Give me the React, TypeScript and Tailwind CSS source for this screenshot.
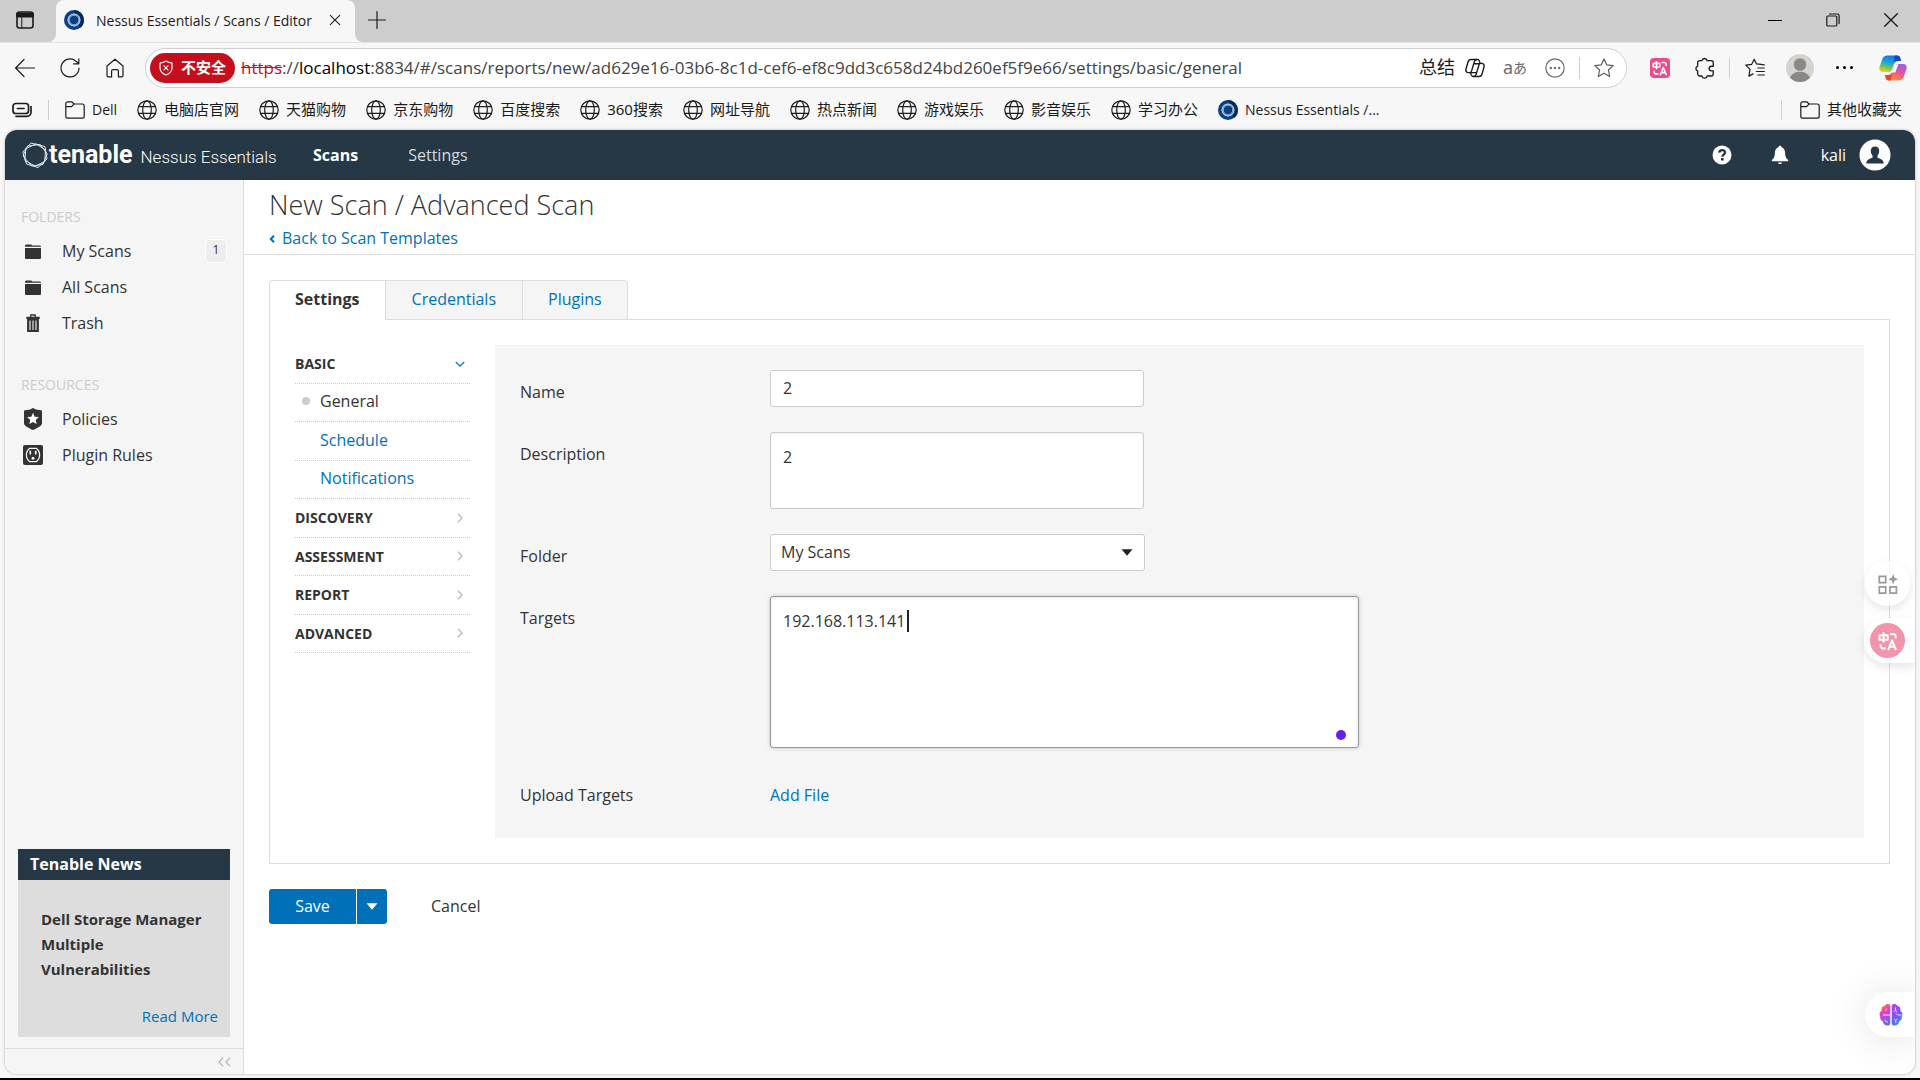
import React from "react";

type IconProps = { className?: string };

const stroke = {
  fill: "none",
  stroke: "currentColor",
  strokeWidth: 1.2,
  strokeLinecap: "round" as const,
  strokeLinejoin: "round" as const,
};

const TabActionsIcon = ({ className }: IconProps) => (
  <svg viewBox="0 0 20 20" className={className} {...stroke} strokeWidth={1.6}>
    <rect x="2" y="2" width="16" height="16" rx="2.5" />
    <path d="M2 3.5h16v3.2H2z" fill="currentColor" />
    <path d="M6.8 7v11" strokeWidth={1} />
  </svg>
);
const NessusIcon = ({ className }: IconProps) => (
  <svg viewBox="0 0 20 20" className={className}>
    <circle cx="10" cy="10" r="10" fill="#0a3f86" />
    <path d="M10 0a10 10 0 0 1 10 10 10 10 0 0 1-4 8z" fill="#072a5c" />
    <g fill="none" stroke="#bcd4ee" strokeWidth="0.8">
      <path d="M10 3.6l5.6 3.2v6.4L10 16.4l-5.6-3.2V6.800z" />
      <path d="M6.800 4.400h6.400l3.200 5.600-3.200 5.600H6.800L3.600 10z" />
      <circle cx="10" cy="10" r="4.800" />
    </g>
  </svg>
);
const CloseIcon = ({ className }: IconProps) => (
  <svg viewBox="0 0 14 14" className={className} {...stroke}>
    <path d="M1.500 1.500l11 11M12.500 1.500l-11 11" />
  </svg>
);
const PlusIcon = ({ className }: IconProps) => (
  <svg viewBox="0 0 20 20" className={className} {...stroke}>
    <path d="M10 1.500v17M1.500 10h17" />
  </svg>
);
const RestoreIcon = ({ className }: IconProps) => (
  <svg viewBox="0 0 14 14" className={className} {...stroke}>
    <rect x="0.800" y="3" width="10" height="10" rx="1" />
    <path d="M3.500 1h8a1.600 1.600 0 0 1 1.600 1.600v8" />
  </svg>
);
const BackIcon = ({ className }: IconProps) => (
  <svg viewBox="0 0 20 20" className={className} {...stroke}>
    <path d="M19.500 10H.8M9 1.500L.6 10 9 18.500" />
  </svg>
);
const ReloadIcon = ({ className }: IconProps) => (
  <svg viewBox="0 0 20 20" className={className} {...stroke}>
    <path d="M19 10.200a9 9 0 1 1-3-7L18.500 5.300M18.800.8v5h-5.300" />
  </svg>
);
const HomeIcon = ({ className }: IconProps) => (
  <svg viewBox="0 0 20 20" className={className} {...stroke}>
    <path d="M10 1.200L2 8v9.500a1.400 1.400 0 0 0 1.400 1.400h3.200V13a1.400 1.400 0 0 1 1.400-1.400h4a1.400 1.400 0 0 1 1.400 1.400v5.900h3.200a1.400 1.400 0 0 0 1.400-1.400V8z" />
  </svg>
);
const ShieldXIcon = ({ className }: IconProps) => (
  <svg viewBox="0 0 14 16" className={className} {...stroke}>
    <path d="M7 1c1.700 1.300 3.600 1.900 6 2v4.800c0 3.400-2 5.800-6 7.200-4-1.400-6-3.800-6-7.200V3c2.400-.1 4.300-.7 6-2z" />
    <path d="M5 5.800l4 4M9 5.800l-4 4" />
  </svg>
);
const CopilotOutlineIcon = ({ className }: IconProps) => (
  <svg viewBox="0 0 20 20" className={className} {...stroke} strokeWidth={1.400}>
    <path d="M7.600 1.500h4.800c1.200 0 1.700.7 2 1.600l.7 2.300h1.400c2 0 3.100 1.500 2.500 3.600l-2 7c-.4 1.500-1.300 2.500-2.900 2.500H8.300c-1.200 0-1.800-.7-2.100-1.600l-.6-2.300H3.400C1.500 14.600.4 13.100 1 11l2-7c.5-1.500 1.500-2.500 3-2.500z" />
    <path d="M11.800 1.500c-1.300 0-2 .8-2.400 2L6.600 12.900c-.4 1.200-1 1.700-2.200 1.700M8.700 18.500c1.200 0 2-.8 2.400-2l2.800-9.400c.3-1.100 1-1.700 2.200-1.700M8.700 5.800h6M5.600 14.600h6" />
  </svg>
);
const DotsCircleIcon = ({ className }: IconProps) => (
  <svg viewBox="0 0 20 20" className={className} {...stroke}>
    <circle cx="10" cy="10" r="9.200" />
    <g fill="currentColor" stroke="none">
      <circle cx="5.800" cy="10" r="1.200" /><circle cx="10" cy="10" r="1.200" /><circle cx="14.200" cy="10" r="1.200" />
    </g>
  </svg>
);
const StarIcon = ({ className }: IconProps) => (
  <svg viewBox="0 0 20 20" className={className} {...stroke}>
    <path d="M10 .9l2.700 5.900 6.500.8-4.800 4.400 1.300 6.500L10 15.300l-5.700 3.200L5.600 12 .8 7.600l6.500-.8z" />
  </svg>
);
const TranslateIcon = ({ className }: IconProps) => (
  <svg viewBox="0 0 20 20" className={className} fill="none" stroke="currentColor" strokeWidth="2" strokeLinejoin="round">
    <path d="M1.500 4.200h8.200v4.600H1.500zM5.600 1.200v10.300M12 3.200h3.600a2 2 0 0 1 2 2v2.200M2.600 13.200v1.800a2.400 2.400 0 0 0 2.400 2.400h3M10.200 19l3.900-9.600L18 19M11.400 15.800h5.400" />
  </svg>
);
const PuzzleIcon = ({ className }: IconProps) => (
  <svg viewBox="0 0 20 20" className={className} {...stroke}>
    <path d="M7.200 3.300a2.400 2.400 0 0 1 4.700 0h3.600a2 2 0 0 1 2 2v3.100h-1.600a2.100 2.100 0 0 0 0 4.200h1.600v2.700a2 2 0 0 1-2 2h-3.600a2.400 2.400 0 0 1-4.700 0H5.300a2 2 0 0 1-2-2v-2.600a2.400 2.400 0 0 1 0-4.500V5.300a2 2 0 0 1 2-2z" />
  </svg>
);
const FavoritesIcon = ({ className }: IconProps) => (
  <svg viewBox="0 0 20 20" className={className} {...stroke}>
    <path d="M19.300 6.800l-5.400-.6L11.500 6 9.200 1.200 6.600 6.400.8 7.200 5 11.400l-1.100 6.700L8 15.900M12.800 10h6.500M11.300 13.500h8M12.800 17h6.500" />
  </svg>
);
const CopilotIcon = ({ className }: IconProps) => (
  <svg viewBox="0 0 28 26" className={className}>
    <defs>
      <linearGradient id="cpA" x1="0.600" y1="0" x2="0.300" y2="1">
        <stop offset="0" stopColor="#1b6fe0" /><stop offset=".45" stopColor="#18a8d8" /><stop offset=".75" stopColor="#7cc453" /><stop offset="1" stopColor="#f2cf12" />
      </linearGradient>
      <linearGradient id="cpB" x1="0.800" y1="0" x2="0.300" y2="1">
        <stop offset="0" stopColor="#9a5bea" /><stop offset=".45" stopColor="#e2559c" /><stop offset=".8" stopColor="#fb7a4e" /><stop offset="1" stopColor="#fba03a" />
      </linearGradient>
    </defs>
    <path d="M8.500.5h9.500c2 0 2.800 1 3.300 2.700L22 6h-3.600c-2 0-3 1.200-3.500 3l-1.700 5.300c-.7 2-1.700 2.600-3.600 2.600H3.800C.8 16.900-.2 14.700.6 12L3.300 4C4.200 1.700 5.700.5 8.500.5z" fill="url(#cpA)" />
    <path d="M16 .5h2c2 0 2.800 1 3.300 2.700L22 6h-3.600c-2 0-3 1.200-3.500 3z" fill="#1746c4" />
    <path d="M19.500 25.500H10c-2 0-2.800-1-3.300-2.700L6 20h3.600c2 0 3-1.200 3.500-3l1.700-5.400c.7-2 1.700-2.500 3.600-2.500h5.800c3 0 4 2.200 3.200 4.900L24.700 22c-.9 2.300-2.400 3.500-5.200 3.500z" fill="url(#cpB)" />
    <path d="M12 25.500h-2c-2 0-2.800-1-3.300-2.700L6 20h3.600c2 0 3-1.200 3.500-3z" fill="#ee4034" />
    <path d="M15.700 9.300h3.700l-3.200 8.200h-3.700z" fill="#fff" />
  </svg>
);
const CollectIcon = ({ className }: IconProps) => (
  <svg viewBox="0 0 20 16" className={className} {...stroke} strokeWidth={1.700}>
    <rect x="1" y="1.500" width="15.500" height="10" rx="2.800" />
    <path d="M5.500 6.500h6.500M4 14.300h11a4 4 0 0 0 4-4V4.500" />
  </svg>
);
const FolderOutlineIcon = ({ className }: IconProps) => (
  <svg viewBox="0 0 20 18" className={className} {...stroke}>
    <path d="M.8 5.500V2.700A1.900 1.900 0 0 1 2.700.8h4l2.500 2.200h8.100a1.900 1.900 0 0 1 1.900 1.900v10.300a1.900 1.900 0 0 1-1.900 1.900H2.700a1.900 1.900 0 0 1-1.900-1.900zM.8 5.700h5.700L9.200 3" />
  </svg>
);
const GlobeIcon = ({ className }: IconProps) => (
  <svg viewBox="0 0 20 20" className={className} {...stroke}>
    <circle cx="10" cy="10" r="9.200" />
    <ellipse cx="10" cy="10" rx="4.300" ry="9.200" />
    <path d="M1.600 6.700h16.800M1.600 13.300h16.800" />
  </svg>
);
const TenableMark = ({ className }: IconProps) => (
  <svg viewBox="0 0 26 26" className={className} fill="none" stroke="#dfe5ea" strokeWidth="1">
    <path d="M9 1l14 3.500 2 12.500-9 8.500L4.500 22 .8 10z" />
    <path d="M14 1.800l9.500 6-.8 11.700-9.500 4.700L3 18.500l.8-11.700z" />
    <path d="M5.500 4l12.700-1.500 7 9.500L21 22.500 9.500 24 1 14z" />
  </svg>
);
const HelpIcon = ({ className }: IconProps) => (
  <svg viewBox="0 0 20 20" className={className}>
    <circle cx="10" cy="10" r="9.500" fill="#fff" />
    <path d="M7.200 7.700c.2-1.700 1.300-2.600 2.900-2.600 1.700 0 2.900.9 2.900 2.400 0 2.100-2.700 2.100-2.700 4.300" fill="none" stroke="#263746" strokeWidth="2.300" />
    <rect x="9" y="13" width="2.600" height="2.500" fill="#263746" />
  </svg>
);
const BellIcon = ({ className }: IconProps) => (
  <svg viewBox="0 0 18 20" className={className} fill="#fff">
    <path d="M9 .8c1 0 1.500.6 1.500 1.500 2.500.8 3.400 2.800 3.600 5.500.2 3.700.8 5.700 3.100 7.300v1.100H.8v-1.100c2.300-1.600 2.900-3.600 3.100-7.300.2-2.700 1.100-4.700 3.600-5.500C7.500 1.400 8 .8 9 .8zM7 17.500h4c-.2 1-1 1.600-2 1.600s-1.800-.6-2-1.600z" />
  </svg>
);
const UserIcon = ({ className }: IconProps) => (
  <svg viewBox="0 0 32 32" className={className}>
    <circle cx="16" cy="16" r="15.500" fill="#fff" />
    <path d="M16 7.500c2.900 0 4.300 1.900 4.200 4.500-.1 2.300-.9 3.500-1.700 4.500v2.200c2.600 1 6 1.800 6.300 5.800H7.200c.3-4 3.700-4.800 6.300-5.800v-2.200c-.8-1-1.600-2.200-1.700-4.500-.1-2.600 1.300-4.500 4.200-4.500z" fill="#263746" />
  </svg>
);
const FolderIcon = ({ className }: IconProps) => (
  <svg viewBox="0 0 16 16" className={className} fill="#333">
    <path d="M0 3.800V2.600l1-1h5.200l1 .9h8l.8.800v.5zM0 4.900h16V15a1 1 0 0 1-1 1H1a1 1 0 0 1-1-1z" />
  </svg>
);
const TrashIcon = ({ className }: IconProps) => (
  <svg viewBox="0 0 14 18" className={className}>
    <path d="M4.800 3V1h4.400v2" fill="none" stroke="#333" strokeWidth="1.300" />
    <path d="M.3 2.800h13.400V5H.3zM1.100 5h11.800v13H1.100z" fill="#333" />
    <path d="M4 6.500v9.500M7 6.500v9.500M10 6.500v9.500" stroke="#f5f5f5" strokeWidth="1.100" />
  </svg>
);
const PolicyIcon = ({ className }: IconProps) => (
  <svg viewBox="0 0 18 22" className={className}>
    <path d="M9 0c2.600 1.500 5.200 2.200 8.300 2.200L18 3v12.500c0 2.200-5.500 5-9 6.500-3.500-1.500-9-4.300-9-6.500V3l.7-.8C3.800 2.200 6.400 1.500 9 0z" fill="#333" />
    <path d="M9 4.800l1.700 3.900 4.200.4-3.200 2.800 1 4.200L9 13.900l-3.700 2.200 1-4.200-3.200-2.800 4.200-.4z" fill="#fff" />
  </svg>
);
const PluginIcon = ({ className }: IconProps) => (
  <svg viewBox="0 0 20 20" className={className}>
    <rect width="20" height="20" rx="2" fill="#333" />
    <path d="M6.800 3.300h6.400c2.300 1.600 3.400 3.600 3.400 6.700s-1.100 5.100-3.400 6.700H6.800C4.500 15.100 3.400 13.100 3.400 10s1.100-5.100 3.400-6.700z" fill="none" stroke="#fff" strokeWidth="1.200" />
    <path d="M6.500 5.800h1.600v3.600H6.500zM11.900 5.800h1.600v3.600h-1.600zM8.600 14.500v-1.200c0-1.800 2.800-1.800 2.800 0v1.200z" fill="#fff" />
  </svg>
);
const BrainIcon = ({ className }: IconProps) => (
  <svg viewBox="0 0 24 24" className={className}>
    <defs>
      <linearGradient id="brA" x1="0.300" y1="0" x2="0.600" y2="1">
        <stop offset="0" stopColor="#f58a2c" /><stop offset=".35" stopColor="#e63fc0" /><stop offset="1" stopColor="#5b6cf5" />
      </linearGradient>
      <linearGradient id="brB" x1="0.200" y1="0" x2="0.700" y2="1">
        <stop offset="0" stopColor="#b43ff0" /><stop offset=".6" stopColor="#6e5cf5" /><stop offset="1" stopColor="#2aa2f2" />
      </linearGradient>
    </defs>
    <path d="M11.300 2.500C10.500.8 7 .3 5.800 2.800 3 3.300 2 5.600 2.700 7.700.4 9 0 11.800 1.300 13.700.8 16 2 17.700 3.800 18.300c.2 2.500 1.900 4.100 3.700 4.200 2 .5 3.800-.6 3.800-2.500z" fill="url(#brA)" />
    <path d="M12.700 2.500c.8-1.700 4.300-2.200 5.500.3C21 3.300 22 5.600 21.300 7.700c2.300 1.300 2.700 4.100 1.400 6 .5 2.300-.7 4-2.500 4.600-.2 2.500-1.900 4.100-3.700 4.200-2 .5-3.800-.6-3.800-2.500z" fill="url(#brB)" />
    <path d="M4 12h7M6 7.500c1 0 1.500-.6 1.600-1.800M6 16.800c.2 1.700 1.300 2.400 3 2.200M16.500 4.500v3M14.800 8.800l1.700-1.300 1.700 1.300M18.500 12h4M18.500 12l-1.500-1.500M15 16l1.700 1.300 1.700-1.300M16.700 17.300v2.500" fill="none" stroke="#ffd9f6" strokeWidth="1" />
  </svg>
);
const Caret = ({ className }: IconProps) => (
  <svg viewBox="0 0 12 7" className={className} fill="currentColor"><path d="M.5.300h11L6 6.800z" /></svg>
);
const Chevron = ({ className }: IconProps) => (
  <svg viewBox="0 0 6 10" className={className} fill="none" stroke="currentColor" strokeWidth="1.300"><path d="M1 .8L5 5 1 9.200" /></svg>
);

const bookmarks = ["电脑店官网", "天猫购物", "京东购物", "百度搜索", "360搜索", "网址导航", "热点新闻", "游戏娱乐", "影音娱乐", "学习办公"];

const iconBtn = "flex h-10 w-[45px] shrink-0 items-center justify-center";

function Browser() {
  return (
    <div className="font-['Noto_Sans','Noto_Sans_CJK_SC',sans-serif] text-[#1b1b1b]">
      <div className="flex h-[42px] bg-[#cdcdcd]">
        <div className="w-14 bg-[#f7f7f7]">
          <button aria-label="Tab actions" className="flex h-full w-full items-center justify-center rounded-br-lg bg-[#cdcdcd] pr-1.5 pb-0.5"><TabActionsIcon className="size-5" /></button>
        </div>
        <div className="flex w-[299px] items-center rounded-t-lg bg-[#f7f7f7] pb-0.5 pl-2">
          <NessusIcon className="size-5 shrink-0" />
          <span className="ml-3 flex-1 font-['Open_Sans',sans-serif] text-[14px] whitespace-nowrap">Nessus Essentials / Scans / Editor</span>
          <button aria-label="Close tab" className="mr-2.5 p-1"><CloseIcon className="size-3" /></button>
        </div>
        <div className="flex-1 bg-[#f7f7f7]">
          <div className="flex h-full items-center justify-between rounded-bl-lg bg-[#cdcdcd] pb-0.5">
            <button aria-label="New tab" className="ml-[11px] p-px"><PlusIcon className="size-5" /></button>
            <div className="flex">
              <button aria-label="Minimize" className="flex h-10 w-[58px] items-center justify-center"><span className="h-px w-3.5 bg-black" /></button>
              <button aria-label="Restore" className="flex h-10 w-[58px] items-center justify-center"><RestoreIcon className="size-3.5" /></button>
              <button aria-label="Close" className="flex h-10 w-[58px] items-center justify-center"><CloseIcon className="size-4" /></button>
            </div>
          </div>
        </div>
      </div>
      <div className="flex h-[50px] items-center border-t border-[#e4e4e4] bg-[#f7f7f7] px-0.5">
        <button aria-label="Back" className={iconBtn}><BackIcon className="size-5" /></button>
        <button aria-label="Reload" className={iconBtn}><ReloadIcon className="size-5" /></button>
        <button aria-label="Home" className={iconBtn}><HomeIcon className="size-5" /></button>
        <div className="mr-2.5 ml-2 flex h-10 min-w-0 flex-1 items-center rounded-full border border-[#cfcfcf] bg-white pl-1">
          <button className="flex h-[30px] w-[85px] shrink-0 items-center justify-center gap-2 rounded-full bg-[#c50f1f] text-[15px] font-bold text-white"><ShieldXIcon className="h-4 w-3.5" />不安全</button>
          <p className="ml-1.5 flex-1 truncate font-['Open_Sans',sans-serif] text-[17px] text-[#444]">
            <span className="text-[#c50f1f] line-through">https</span>://<span className="text-black">localhost</span>:8834/#/scans/reports/new/ad629e16-03b6-8c1d-cef6-ef8c9dd3c658d24bd260ef5f9e66/settings/basic/general
          </p>
          <button className="mr-2.5 flex items-center gap-2.5 text-[18px]">总结<CopilotOutlineIcon className="size-5" /></button>
          <button className="flex w-10 items-center justify-center text-[18px] text-[#6b6b6b]">a<span className="text-[14px]">あ</span></button>
          <button aria-label="More actions" className="flex w-10 justify-center text-[#6b6b6b]"><DotsCircleIcon className="size-5" /></button>
          <span className="mx-1 h-[22px] w-px bg-[#d0d0d0]" />
          <button aria-label="Favorite" className="mr-0.5 flex w-10 justify-center text-[#5c5c5c]"><StarIcon className="size-5" /></button>
        </div>
        <button aria-label="Translate" className={iconBtn}><span className="flex size-5 items-center justify-center rounded-sm bg-[#ec4a89] text-white"><TranslateIcon className="size-4" /></span></button>
        <button aria-label="Extensions" className={iconBtn}><PuzzleIcon className="size-[22px]" /></button>
        <span className="mx-0.5 h-5 w-px bg-[#d0d0d0]" />
        <button aria-label="Favorites" className={iconBtn}><FavoritesIcon className="size-5" /></button>
        <button aria-label="Profile" className={iconBtn}>
          <svg viewBox="0 0 28 28" className="size-7">
            <circle cx="14" cy="14" r="14" fill="#d5d3cf" /><circle cx="14" cy="10.500" r="6.300" fill="#8a8784" />
            <path d="M4 23.800c2-4.300 5.500-6 10-6s8 1.700 10 6A14 14 0 0 1 14 28a14 14 0 0 1-10-4.200z" fill="#8a8784" />
          </svg>
        </button>
        <button aria-label="Menu" className={iconBtn + " gap-1"}><span className="size-[3px] rounded-full bg-black" /><span className="size-[3px] rounded-full bg-black" /><span className="size-[3px] rounded-full bg-black" /></button>
        <button aria-label="Copilot" className="flex w-[51px] shrink-0 justify-center"><CopilotIcon className="h-[26px] w-7" /></button>
      </div>
      <div className="flex h-[38px] items-center bg-[#f7f7f7] pr-[18px] pb-[3px] pl-3 text-[15px]">
        <button aria-label="Workspaces"><CollectIcon className="h-4 w-5" /></button>
        <span className="mr-4 ml-4 h-5 w-px bg-[#d0d0d0]" />
        <nav className="flex flex-1 items-center gap-5 whitespace-nowrap">
          <a href="#dell" className="flex items-center gap-[7px]"><FolderOutlineIcon className="h-[18px] w-5" /><span className="font-['Open_Sans',sans-serif] text-[14px]">Dell</span></a>
          {bookmarks.map((b) => (
            <a key={b} href="#bookmark" className="flex items-center gap-[7px]"><GlobeIcon className="size-5" />{b}</a>
          ))}
          <a href="#nessus" className="flex items-center gap-[7px]"><NessusIcon className="size-5" /><span className="font-['Open_Sans',sans-serif] text-[14px]">Nessus Essentials /...</span></a>
        </nav>
        <span className="mr-[18px] h-5 w-px bg-[#d0d0d0]" />
        <button className="flex items-center gap-[7px]"><FolderOutlineIcon className="h-[18px] w-5" />其他收藏夹</button>
      </div>
    </div>
  );
}

const sideLink = "flex h-9 items-center pr-4 pl-[15px]";
const sideIcon = "mr-4 flex w-[26px] justify-center";

function Sidebar() {
  return (
    <aside className="flex w-[239px] shrink-0 flex-col border-r border-[#ddd] bg-[#f5f5f5]">
      <h2 className="mt-[25px] pl-4 text-[14px] leading-6 text-[#ccc]">FOLDERS</h2>
      <a href="#my" className={sideLink + " mt-1"}><span className={sideIcon}><FolderIcon className="size-4" /></span><span className="flex-1">My Scans</span><span className="flex h-6 w-[22px] items-center justify-center rounded-sm border border-white bg-[#eee] pb-0.5 text-[12px]">1</span></a>
      <a href="#all" className={sideLink}><span className={sideIcon}><FolderIcon className="size-4" /></span>All Scans</a>
      <a href="#trash" className={sideLink}><span className={sideIcon}><TrashIcon className="h-[18px] w-3.5" /></span>Trash</a>
      <h2 className="mt-8 pl-4 text-[14px] leading-6 text-[#ccc]">RESOURCES</h2>
      <a href="#policies" className={sideLink + " mt-1"}><span className={sideIcon}><PolicyIcon className="h-[22px] w-[18px]" /></span>Policies</a>
      <a href="#rules" className={sideLink}><span className={sideIcon}><PluginIcon className="size-5" /></span>Plugin Rules</a>
      <section className="mx-[13px] mt-auto mb-[11px] bg-[#ddd]">
        <h3 className="flex h-[31px] items-center bg-[#263746] pb-0.5 pl-3 text-[16px] font-bold text-white">Tenable News</h3>
        <p className="pt-[27px] pl-[23px] text-[15px] leading-[25px] font-bold">Dell Storage Manager<br />Multiple<br />Vulnerabilities</p>
        <a href="#more" className="block pt-[22px] pr-3 pb-[9px] text-right text-[15px] leading-6 text-[#0071b9]">Read More</a>
      </section>
      <button aria-label="Collapse" className="flex h-[26px] items-center justify-end gap-px border-t border-[#ddd] pr-3 text-[#bbb]">
        <Chevron className="h-2.5 w-1.5 rotate-180" /><Chevron className="h-2.5 w-1.5 rotate-180" />
      </button>
    </aside>
  );
}

const groupRow = "flex w-full items-center justify-between border-b border-dotted border-[#ccc] pr-[7px] text-left text-[14px] font-bold";
const subRow = "flex items-center border-b border-dotted border-[#ccc] pb-0.5 pl-[25px] text-[#0071b9]";
const label = "w-[250px] shrink-0 pt-2.5 leading-6";
const field = "block rounded-[3px] border border-[#ccc] bg-white outline-none";

function SettingsForm() {
  return (
    <form className="flex min-w-0 flex-1 flex-col gap-[25px] bg-[#f5f5f5] p-[25px]">
      <div className="flex"><label htmlFor="name" className={label}>Name</label><input id="name" defaultValue="2" className={field + " h-[37px] w-[374px] px-3 pb-0.5"} /></div>
      <div className="flex"><label htmlFor="desc" className={label}>Description</label><textarea id="desc" defaultValue="2" className={field + " h-[77px] w-[374px] resize-none px-3 py-3 leading-6 shadow-[inset_0_1px_2px_rgba(0,0,0,0.08)]"} /></div>
      <div className="flex"><label htmlFor="folder" className={label}>Folder</label>
        <div className="relative">
          <select id="folder" className={field + " h-[37px] w-[375px] appearance-none px-2.5 pb-0.5"}><option>My Scans</option></select>
          <Caret className="pointer-events-none absolute top-[15px] right-3 h-[7px] w-3 text-[#222]" />
        </div>
      </div>
      <div className="flex"><label htmlFor="targets" className={label}>Targets</label>
        <div className="relative">
          <textarea id="targets" defaultValue="192.168.113.141" className="block h-[152px] w-[589px] resize-none rounded-[3px] border border-[#999] bg-white px-3 py-3 leading-6 shadow-[0_0_4px_rgba(0,0,0,0.2),inset_0_1px_3px_rgba(0,0,0,0.1)] outline-none" />
          <span className="absolute top-3.5 left-[137px] h-[22px] w-0.5 bg-[#222]" />
          <span className="absolute right-[13px] bottom-2 size-2.5 rounded-full bg-[#6320f5]" />
        </div>
      </div>
      <div className="flex h-10 items-start"><span className={label}>Upload Targets</span><button type="button" className="pt-2.5 leading-6 text-[#0071b9]">Add File</button></div>
    </form>
  );
}

export default function App() {
  return (
    <div className="flex min-h-screen flex-col bg-[#f7f7f7]">
      <Browser />
      <div className="relative mr-[5px] mb-1 ml-[5px] flex flex-1 flex-col overflow-hidden rounded-xl bg-white font-['Open_Sans',sans-serif] text-[16px] text-[#333] shadow-[0_0_3px_rgba(0,0,0,0.3)]">
        <header className="flex h-[50px] items-center bg-[#263746] pr-6 pl-[17px] text-white">
          <div className="flex w-[291px] shrink-0 items-center">
            <TenableMark className="size-[26px]" />
            <span className="ml-px font-['Roboto',sans-serif] text-[25px] leading-6 font-bold">tenable</span>
            <span className="mt-1 ml-2 font-['Roboto',sans-serif] text-[17px] leading-6 font-light">Nessus Essentials</span>
          </div>
          <nav className="flex flex-1 items-center gap-[50px]">
            <a href="#scans" className="font-bold">Scans</a>
            <a href="#settings" className="text-[#d5dadd]">Settings</a>
          </nav>
          <button aria-label="Help"><HelpIcon className="size-5" /></button>
          <button aria-label="Notifications" className="mr-8 ml-[39px]"><BellIcon className="h-5 w-[18px]" /></button>
          <button className="flex items-center gap-[13px]">kali<UserIcon className="size-8" /></button>
        </header>
        <div className="flex flex-1">
          <Sidebar />
          <main className="min-w-0 flex-1">
            <div className="h-[75px] border-b border-[#ddd] pt-[7px] pl-[25px]">
              <h1 className="text-[27px] leading-9 font-light">New Scan / Advanced Scan</h1>
              <a href="#templates" className="mt-[3px] flex items-center leading-6 text-[#0071b9]">
                <svg viewBox="0 0 6 8" className="mt-px mr-[7px] h-2 w-1.5" fill="none" stroke="currentColor" strokeWidth="2"><path d="M5 .8L1.800 4 5 7.200" /></svg>
                Back to Scan Templates
              </a>
            </div>
            <div className="p-[25px]">
              <div role="tablist" className="relative -mb-px flex h-10">
                <button role="tab" aria-selected="true" className="rounded-tl-sm border-t border-b border-l border-[#ddd] border-b-white bg-white px-[25px] pb-0.5 font-bold">Settings</button>
                <button role="tab" aria-selected="false" className="border border-[#ddd] bg-[#f5f5f5] px-[26px] pb-0.5 text-[#0071b9]">Credentials</button>
                <button role="tab" aria-selected="false" className="rounded-tr-sm border border-l-0 border-[#ddd] bg-[#f5f5f5] px-[25px] pb-0.5 text-[#0071b9]">Plugins</button>
              </div>
              <div className="flex gap-[25px] border border-[#ddd] p-[25px]">
                <nav className="grid h-[308px] w-[175px] shrink-0 grid-rows-8">
                  <button className={groupRow}>BASIC<Chevron className="h-2.5 w-1.5 rotate-90 text-[#0087b0]" /></button>
                  <a href="#general" className="flex items-center gap-2.5 border-b border-dotted border-[#ccc] pb-0.5 pl-[7px]"><span className="size-2 rounded-full bg-[#ccc]" />General</a>
                  <a href="#schedule" className={subRow}>Schedule</a>
                  <a href="#notifications" className={subRow}>Notifications</a>
                  {["DISCOVERY", "ASSESSMENT", "REPORT", "ADVANCED"].map((g) => (
                    <button key={g} className={groupRow}>{g}<Chevron className="h-2.5 w-1.5 text-[#bbb]" /></button>
                  ))}
                </nav>
                <SettingsForm />
              </div>
              <div className="mt-[25px] flex h-[35px] items-center text-white">
                <button className="h-full w-[87px] rounded-l-[3px] bg-[#0071b9] pb-0.5">Save</button>
                <button aria-label="Save options" className="ml-px flex h-full w-[30px] items-center justify-center rounded-r-[3px] bg-[#0071b9]"><Caret className="h-[7px] w-3" /></button>
                <button className="ml-11 pb-0.5 text-[#333]">Cancel</button>
              </div>
            </div>
          </main>
        </div>
        <div className="absolute top-[431px] right-0 flex flex-col items-end gap-3">
          <button aria-label="Apps" className="mr-[5px] flex size-[45px] items-center justify-center rounded-full bg-white/80 text-[#999] shadow-[0_4px_10px_rgba(0,0,0,0.1)]">
            <svg viewBox="0 0 20 20" className="size-5" fill="none" stroke="currentColor" strokeWidth="1.700">
              <path d="M1.300 2.300h6.400v6.400H1.300zM1.300 12.800h6.400v6.400H1.300zM12 12.800h6.400v6.400H12z" />
              <path d="M15.200 0l1.300 3.600 3.500 1.600-3.500 1.600-1.300 3.600-1.300-3.600-3.500-1.600 3.500-1.600z" fill="currentColor" stroke="none" />
            </svg>
          </button>
          <button aria-label="Translate page" className="flex h-[45px] w-[51px] items-center rounded-l-full bg-white/90 pl-1.5 shadow-[0_4px_10px_rgba(0,0,0,0.1)]">
            <span className="flex size-[35px] items-center justify-center rounded-full bg-[#f294ae] text-white"><TranslateIcon className="size-5" /></span>
          </button>
        </div>
        <button aria-label="Assistant" className="absolute right-0 bottom-[37px] flex h-[45px] w-[50px] items-center rounded-l-full bg-white pl-3.5 shadow-[0_2px_40px_rgba(0,0,0,0.12)]"><BrainIcon className="size-6" /></button>
      </div>
      <div className="h-0.5 bg-black" />
    </div>
  );
}
